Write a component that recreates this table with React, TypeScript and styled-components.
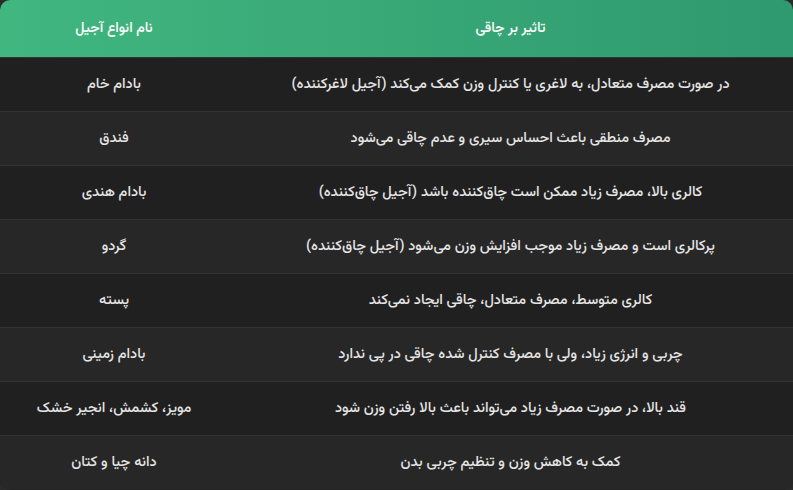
import React from "react";
import styled, { createGlobalStyle } from "styled-components";

const Global = createGlobalStyle`
  html, body { margin: 0; padding: 0; background: #2a2a2a; }
  body { font-family: "Vazirmatn", "Noto Sans Arabic", "Noto Sans Arabic UI", "DejaVu Sans", sans-serif; }
`;

const Table = styled.div`
  width: 793px;
  height: 490px;
  border-radius: 10px;
  overflow: hidden;
  background: #222222;
  display: flex;
  flex-direction: column;
`;

const HeaderRow = styled.div`
  display: grid;
  grid-template-columns: 228px 1fr;
  height: 57px;
  background: linear-gradient(90deg, #41b67f 0%, #38a877 50%, #2f996f 100%);
`;

const Row = styled.div<{ $alt: boolean }>`
  display: grid;
  grid-template-columns: 228px 1fr;
  height: 53px;
  border-top: 1px solid #333333;
  background: ${(p) => (p.$alt ? "#272727" : "#202020")};
`;

const Cell = styled.div<{ $head?: boolean }>`
  direction: rtl;
  display: flex;
  align-items: center;
  justify-content: center;
  font-size: ${(p) => (p.$head ? "14px" : "14.5px")};
  font-weight: ${(p) => (p.$head ? 600 : 500)};
  color: ${(p) => (p.$head ? "#f4fbf7" : "#e4e4e4")};
  white-space: nowrap;
`;

const rows: [string, string][] = [
  ["بادام خام", "در صورت مصرف متعادل، به لاغری یا کنترل وزن کمک می‌کند (آجیل لاغرکننده)"],
  ["فندق", "مصرف منطقی باعث احساس سیری و عدم چاقی می‌شود"],
  ["بادام هندی", "کالری بالا، مصرف زیاد ممکن است چاق‌کننده باشد (آجیل چاق‌کننده)"],
  ["گردو", "پرکالری است و مصرف زیاد موجب افزایش وزن می‌شود (آجیل چاق‌کننده)"],
  ["پسته", "کالری متوسط، مصرف متعادل، چاقی ایجاد نمی‌کند"],
  ["بادام زمینی", "چربی و انرژی زیاد، ولی با مصرف کنترل شده چاقی در پی ندارد"],
  ["مویز، کشمش، انجیر خشک", "قند بالا، در صورت مصرف زیاد می‌تواند باعث بالا رفتن وزن شود"],
  ["دانه چیا و کتان", "کمک به کاهش وزن و تنظیم چربی بدن"],
];

export default function App() {
  return (
    <>
      <Global />
      <Table>
        <HeaderRow>
          <Cell $head>نام انواع آجیل</Cell>
          <Cell $head>تاثیر بر چاقی</Cell>
        </HeaderRow>
        {rows.map(([name, effect], i) => (
          <Row key={name} $alt={i % 2 === 1}>
            <Cell>{name}</Cell>
            <Cell>{effect}</Cell>
          </Row>
        ))}
      </Table>
    </>
  );
}
